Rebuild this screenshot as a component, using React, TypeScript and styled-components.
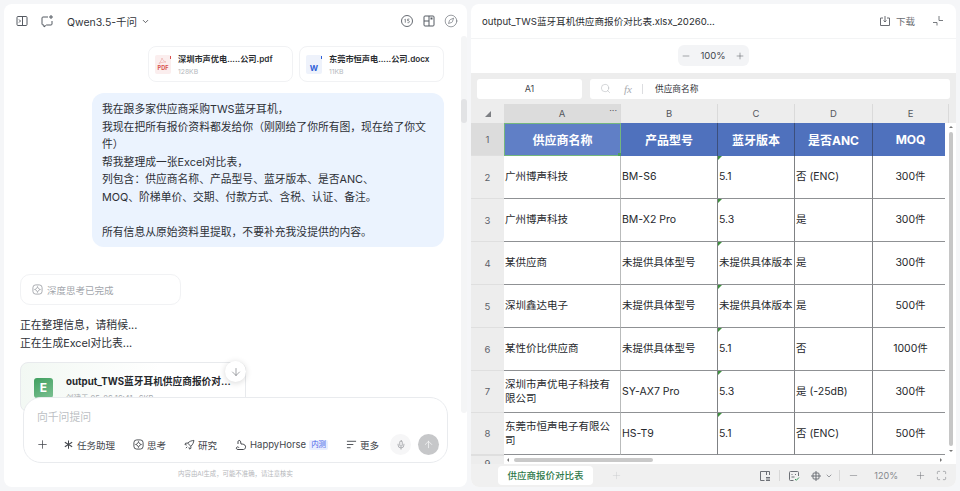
import React from 'react'
import styled, { createGlobalStyle } from 'styled-components'
import {
  ArrowDown, ArrowUp, ChevronDown, Compass, Maximize, Mic, Minus, Plus, Search,
} from 'lucide-react'

const FONT = `Inter, "Noto Sans CJK SC", sans-serif`

const GlobalStyle = createGlobalStyle`
  html, body { margin: 0; padding: 0; height: 100%; background: #f5f6f8; }
  body { font-family: ${FONT}; color: #26282c; overflow: hidden; }
  * { box-sizing: border-box; }
`

const Page = styled.div`
  width: 960px;
  height: 491px;
  padding: 4px;
  display: flex;
  gap: 4px;
`

const ChatPanel = styled.section`
  position: relative;
  width: 463px;
  height: 483px;
  background: #fff;
  border-radius: 8px;
  overflow: hidden;
  flex: none;
`

const ChatHeader = styled.header`
  height: 34px;
  padding: 0 9px 0 11px;
  display: flex;
  align-items: center;
  color: #555a62;
`

const IconBtn = styled.span<{ $gap?: number }>`
  display: inline-flex;
  width: 14px;
  height: 14px;
  margin-right: ${p => p.$gap ?? 0}px;
  flex: none;
`

const ModelName = styled.div`
  display: flex;
  align-items: center;
  gap: 4px;
  font-size: 10.5px;
  color: #33363b;
  flex: 1;
`

const Thread = styled.div`
  padding: 8px 19px 0 16px;
  height: 100%;
  overflow: hidden;
`

const Attachments = styled.div`
  display: flex;
  justify-content: flex-end;
  gap: 6px;
  padding-right: 4px;
`

const FileChip = styled.div`
  width: 145px;
  height: 36px;
  border: 1px solid #f1f2f4;
  border-radius: 8px;
  display: flex;
  align-items: center;
  gap: 7px;
  padding-left: 6px;
`

const FileBadge = styled.div<{ $word?: boolean }>`
  position: relative;
  width: 16px;
  height: 19px;
  background: ${p => (p.$word ? '#eef2fb' : '#fbeeee')};
  border-radius: 2px;
  color: ${p => (p.$word ? '#2f5fd8' : '#d8504d')};
  font-weight: 700;
  font-size: ${p => (p.$word ? 8 : 5.5)}px;
  display: flex;
  align-items: flex-end;
  justify-content: center;
  line-height: 11px;
  flex: none;
  &::after {
    content: '';
    position: absolute;
    right: 0;
    top: 1px;
    width: 1px;
    height: 3px;
    background: ${p => (p.$word ? '#2f5fd8' : '#d8504d')};
  }
`

const SwirlSvg = styled.svg`
  position: absolute;
  top: 2px;
  left: 3px;
`

const FileInfo = styled.div`
  display: flex;
  flex-direction: column;
  gap: 2px;
`

const FileName = styled.div`
  font-size: 8.2px;
  font-weight: 600;
  line-height: 12px;
  color: #2b2d31;
  white-space: nowrap;
`

const FileSize = styled.div`
  font-size: 6.8px;
  line-height: 9px;
  color: #b4b7bc;
`

const UserBubble = styled.div`
  margin: 11px 4px 0 72px;
  width: 352px;
  height: 154px;
  padding: 8px 10px;
  background: #ebf3fe;
  border-radius: 12px;
  font-size: 10.8px;
  line-height: 17.5px;
  color: #2d3036;
`

const ThinkingChip = styled.div`
  margin: 27px 0 0 0;
  width: 161px;
  height: 31px;
  border: 1px solid #f1f2f4;
  border-radius: 10px;
  display: flex;
  align-items: center;
  gap: 4px;
  padding-left: 11px;
  color: #a2a5ab;
  font-size: 9.5px;
`

const AnswerText = styled.div`
  margin: 12px 0 0 0;
  font-size: 10.8px;
  line-height: 17.5px;
  color: #2d3036;
`

const ExcelCard = styled.div`
  margin: 10px 0 0 0;
  width: 226px;
  height: 50px;
  border: 1px solid #e8eaed;
  border-radius: 8px;
  display: flex;
  gap: 13px;
  padding: 15px 0 0 13px;
  background: linear-gradient(100deg, #f2f8f3, #fff 60%);
`

const ExcelIcon = styled.div`
  width: 19px;
  height: 20px;
  border-radius: 3px;
  background: linear-gradient(150deg, #3f9f5f, #7cc092);
  color: #fff;
  font-weight: 700;
  font-size: 12px;
  line-height: 20px;
  text-align: center;
  flex: none;
`

const ExcelTitle = styled.div`
  font-size: 9.7px;
  font-weight: 700;
  line-height: 14px;
  margin-top: -3px;
  white-space: nowrap;
`

const ExcelMeta = styled.div`
  font-size: 7.5px;
  line-height: 10px;
  color: #a6a9ae;
  margin-top: 5px;
`

const ScrollDown = styled.div`
  position: absolute;
  left: 221px;
  top: 357px;
  width: 21px;
  height: 21px;
  border-radius: 50%;
  background: #fff;
  box-shadow: 0 1px 6px rgba(0, 0, 0, 0.16);
  color: #666a70;
  display: flex;
  align-items: center;
  justify-content: center;
`

const ThreadScroll = styled.div`
  position: absolute;
  right: 0;
  top: 32px;
  width: 6px;
  height: 377px;
  border-radius: 3px;
  background: #f4f5f6;
  &::after {
    content: '';
    display: block;
    margin-top: 63px;
    height: 24px;
    border-radius: 3px;
    background: #e2e3e5;
  }
`

const Composer = styled.div`
  position: absolute;
  left: 19px;
  top: 393px;
  width: 425px;
  height: 66px;
  background: #fff;
  border: 1px solid #e9ebee;
  border-radius: 18px;
  padding: 11px 8px 0 12px;
`

const Placeholder = styled.div`
  padding-left: 1px;
  font-size: 10.8px;
  line-height: 18px;
  color: #bcbfc4;
`

const ToolRow = styled.div`
  display: flex;
  align-items: center;
  margin-top: 7px;
  font-size: 9.5px;
  color: #43464c;
`

const Tool = styled.div<{ $w: number }>`
  display: flex;
  align-items: center;
  gap: 3px;
  width: ${p => p.$w}px;
  flex: none;
  white-space: nowrap;
`

const BetaTag = styled.span`
  background: #e9eeff;
  color: #4a63e8;
  font-size: 7.5px;
  line-height: 10px;
  padding: 0 2px;
  border-radius: 2px;
`

const RoundBtn = styled.div<{ $solid?: boolean }>`
  width: 21px;
  height: 21px;
  border-radius: 50%;
  margin-left: 7px;
  background: ${p => (p.$solid ? '#c6c7c9' : '#f6f6f7')};
  color: ${p => (p.$solid ? '#fff' : '#6a6d73')};
  display: flex;
  align-items: center;
  justify-content: center;
  flex: none;
`

const Disclaimer = styled.div`
  position: absolute;
  left: 0;
  right: 0;
  top: 465px;
  text-align: center;
  font-size: 6.4px;
  line-height: 10px;
  color: #b5b7bb;
`

const SheetPanel = styled.section`
  width: 485px;
  height: 483px;
  background: #fff;
  border-radius: 8px;
  overflow: hidden;
  display: flex;
  flex-direction: column;
  flex: none;
`

const SheetHeader = styled.header`
  height: 35px;
  flex: none;
  display: flex;
  align-items: center;
  padding: 0 12px 0 11px;
  border-bottom: 1px solid #f3f4f5;
  color: #6a6d73;
`

const SheetTitle = styled.div`
  flex: 1;
  font-size: 9.6px;
  color: #2b2d31;
  white-space: nowrap;
`

const HeaderAction = styled.div`
  display: flex;
  align-items: center;
  gap: 5px;
  font-size: 9.5px;
  color: #6a6d73;
  margin-right: 17px;
`

const ZoomBar = styled.div`
  height: 34px;
  flex: none;
  display: flex;
  align-items: center;
  justify-content: center;
  padding-bottom: 1px;
`

const ZoomPill = styled.div`
  width: 71px;
  height: 21px;
  border-radius: 6px;
  background: #f3f4f6;
  display: flex;
  align-items: center;
  justify-content: space-between;
  padding: 0 4px 0 3px;
  font-size: 9.5px;
  color: #44474d;
`

const FormulaBar = styled.div`
  height: 31px;
  flex: none;
  background: #ededed;
  display: flex;
  align-items: center;
  gap: 8px;
  padding: 0 6px;
`

const CellName = styled.div`
  width: 105px;
  height: 20px;
  background: #fff;
  border-radius: 3px;
  text-align: center;
  font-size: 9px;
  line-height: 20px;
  color: #44474d;
`

const FormulaInput = styled.div`
  flex: 1;
  height: 20px;
  background: #fff;
  border-radius: 3px;
  display: flex;
  align-items: center;
  font-size: 8.7px;
  color: #33363b;
  padding-left: 10px;
`

const Fx = styled.span`
  font-family: "Liberation Serif", serif;
  font-style: italic;
  font-size: 11px;
  color: #a8abb0;
  margin: 0 5px 0 13px;
`

const FormulaSep = styled.span`
  width: 1px;
  height: 10px;
  background: #dcdde0;
  margin: 0 12px 0 5px;
`

const GridArea = styled.div`
  position: relative;
  flex: 1;
  min-height: 0;
  display: flex;
  background: #ededed;
  overflow: hidden;
`

const Table = styled.div`
  display: grid;
  grid-template-columns: 33px 117px 97px 77px 78px 76px;
  grid-template-rows: 19px 33px 43px 43px 43px 43px 43px 42px 42px;
  width: 478px;
  flex: none;
  overflow: hidden;
`

const Corner = styled.div`
  background: #ededed;
  display: flex;
  align-items: center;
  justify-content: center;
  &::after {
    content: '';
    width: 0;
    height: 0;
    border-left: 6px solid transparent;
    border-bottom: 6px solid #7d7f83;
  }
`

const ColHead = styled.div<{ $active?: boolean }>`
  position: relative;
  background: ${p => (p.$active ? '#dcdcdc' : '#ededed')};
  border-right: 1px solid #dadada;
  text-align: center;
  font-size: 9.5px;
  line-height: 20px;
  color: #55585e;
`

const ColMenu = styled.span`
  position: absolute;
  right: 3px;
  top: -3px;
  font-size: 9px;
  color: #55585e;
`

const RowHead = styled.div<{ $active?: boolean }>`
  background: ${p => (p.$active ? '#dcdcdc' : '#ededed')};
  border-bottom: 1px solid #dfdfdf;
  display: flex;
  align-items: center;
  justify-content: center;
  font-size: 9.5px;
  color: #5c6068;
`

const HeadCell = styled.div<{ $selected?: boolean }>`
  position: relative;
  background: ${p => (p.$selected ? '#607fc6' : '#4f71bd')};
  color: #fff;
  font-size: 12px;
  font-weight: 700;
  display: flex;
  align-items: center;
  justify-content: center;
  border-right: 1px solid #3c4f7c;
  ${p => p.$selected && `
    border: 1px solid #74b77e;
    &::after {
      content: '';
      position: absolute;
      right: -1px;
      bottom: -1px;
      width: 3px;
      height: 3px;
      background: #4f9f5c;
    }
  `}
`

const Cell = styled.div<{ $center?: boolean; $mark?: boolean; $first?: boolean }>`
  position: relative;
  background: #fff;
  border-right: 1px solid ${p => (p.$first ? '#b9bbbb' : '#7f8184')};
  border-bottom: 1px solid #8f9194;
  font-size: 10.5px;
  line-height: 13.5px;
  color: #26282c;
  display: flex;
  align-items: center;
  padding: 0 1px;
  justify-content: ${p => (p.$center ? 'center' : 'flex-start')};
  ${p => p.$mark && `
    &::before {
      content: '';
      position: absolute;
      left: 0;
      top: 0;
      border-top: 4px solid #3f8f3f;
      border-right: 4px solid transparent;
    }
  `}
`

const VScroll = styled.div`
  position: absolute;
  right: 0;
  top: 19px;
  bottom: 0;
  width: 11px;
  background: #fff;
  display: flex;
  flex-direction: column;
  align-items: center;
  padding: 3px 0;
`

const VThumb = styled.div`
  flex: 1;
  width: 4px;
  margin: 4px 0;
  background: #c6c6c6;
  border-radius: 2px;
`

const Arrow = styled.span<{ $dir: 'up' | 'down' | 'left' | 'right' }>`
  display: block;
  width: 0;
  height: 0;
  flex: none;
  border: 2.5px solid transparent;
  ${p => (p.$dir === 'up' && 'border-bottom-color: #777; border-top-width: 0;')
    || (p.$dir === 'down' && 'border-top-color: #777; border-bottom-width: 0;')
    || (p.$dir === 'left' && 'border-right-color: #777; border-left-width: 0;')
    || 'border-left-color: #777; border-right-width: 0;'}
`

const HScrollRow = styled.div`
  height: 9px;
  flex: none;
  display: flex;
  align-items: center;
  background: #fff;
  padding-right: 14px;
`

const HScrollGutter = styled.div`
  width: 33px;
  height: 9px;
  background: #ededed;
  border-top: 1px solid #dfdfdf;
  font-size: 9.5px;
  line-height: 16px;
  text-align: center;
  color: #5c6068;
  overflow: hidden;
  margin-right: 3px;
`

const HScrollThumb = styled.div`
  width: 139px;
  height: 4px;
  margin-left: 5px;
  margin-right: auto;
  border-radius: 2px;
  background: #c9c9c9;
`

const SheetTabs = styled.div`
  height: 23px;
  flex: none;
  background: #f0f0f0;
  display: flex;
  align-items: center;
  padding: 0 9px 0 27px;
  color: #6a6d73;
`

const ActiveTab = styled.div`
  width: 95px;
  height: 19px;
  background: #fff;
  border-radius: 4px;
  font-size: 9.5px;
  font-weight: 500;
  line-height: 19px;
  text-align: center;
  color: #2f7a4b;
  margin-right: 18px;
`

const TabSpacer = styled.div`
  flex: 1;
`

const StatusIcon = styled.span<{ $gap?: number; $lead?: number }>`
  display: inline-flex;
  margin-left: ${p => p.$lead ?? 0}px;
  margin-right: ${p => p.$gap ?? 10}px;
  color: #6d7076;
`

const ZoomText = styled.span`
  font-size: 9px;
  color: #85888d;
  margin: 0 17px 0 15px;
`

const StatusSep = styled.span`
  width: 1px;
  height: 11px;
  background: #d8d8d8;
  margin-right: 8px;
`

const SidebarIcon = () => (
  <svg width="14" height="14" viewBox="0 0 14 14" fill="none" stroke="currentColor" strokeWidth="1">
    <rect x="2" y="2.5" width="10" height="9" rx="1" />
    <path d="M7.5 2.5v9M4 5.5L5.5 7 4 8.5" />
  </svg>
)

const NewChatIcon = () => (
  <svg width="14" height="14" viewBox="0 0 14 14" fill="none" stroke="currentColor" strokeWidth="1">
    <path d="M8 3H3a1 1 0 0 0-1 1v6a1 1 0 0 0 1 1h1v2l2.500-2H11a1 1 0 0 0 1-1V7" />
    <path d="M11 1v4M9 3h4" />
  </svg>
)

const ClockBadgeIcon = () => (
  <svg width="14" height="14" viewBox="0 0 14 14" fill="none" stroke="currentColor" strokeWidth="0.9">
    <circle cx="7" cy="7" r="5.5" />
    <path d="M4.6 5.5l.7-.4v3.6M7.5 8.7h1c1.3 0 1.3-2-.1-2H7.6l.1-1.600h1.700" strokeWidth="0.7" />
  </svg>
)

const LayoutIcon = () => (
  <svg width="14" height="14" viewBox="0 0 14 14" fill="none" stroke="currentColor" strokeWidth="1">
    <rect x="2" y="2" width="10" height="10" rx="1" />
    <path d="M2 7h5V2M7 7v5" />
    <rect x="8.5" y="3.5" width="2" height="2" fill="currentColor" stroke="none" />
  </svg>
)

const PdfSwirl = () => (
  <SwirlSvg width="9" height="8" viewBox="0 0 9 8" fill="none" stroke="#eda6a4" strokeWidth="0.6">
    <path d="M4 1c-.5 2-1.500 4-3 5.500 2-1 4-1.500 7-1.500C6 4.500 4.500 3 4 1z" />
  </SwirlSvg>
)

const ThinkIcon = ({ size = 11 }: { size?: number }) => (
  <svg width={size} height={size} viewBox="0 0 12 12" fill="none" stroke="currentColor" strokeWidth="1">
    <rect x="1" y="1" width="10" height="10" rx="3" />
    <path d="M6 2.800c.6 2 1.200 2.600 3.200 3.200-2 .6-2.600 1.200-3.200 3.200C5.400 7.200 4.800 6.600 2.800 6c2-.6 2.600-1.200 3.200-3.200z" />
  </svg>
)

const AsteriskIcon = () => (
  <svg width="11" height="11" viewBox="0 0 12 12" fill="none" stroke="currentColor" strokeWidth="1.1">
    <path d="M6 1.500v9M2 3.500l8 5M10 3.500l-8 5" />
  </svg>
)

const RocketIcon = () => (
  <svg width="11" height="11" viewBox="0 0 12 12" fill="none" stroke="currentColor" strokeWidth="1">
    <path d="M4 4.500C6 2.500 8.500 1.800 10.800 1.500 10.500 4 9.500 6 7.500 8L4 4.500z" />
    <path d="M4 4.500H1.800L1 6l2 .6M7.500 8v2.200L6 11l-.6-2M3.500 8.500L2 10" />
  </svg>
)

const HorseIcon = () => (
  <svg width="12" height="12" viewBox="0 0 12 12" fill="none" stroke="currentColor" strokeWidth="1">
    <path d="M3 5V2.500C3 1.500 5 1 5.500 2.200L6 5c2 0 4 .4 4.500 2.200.3 1.300-.5 3.300-2 3.300H3C1.600 10.500 1 9.500 1.500 8.500 2 7.500 3.500 7.800 4 8.800" />
  </svg>
)

const MoreIcon = () => (
  <svg width="11" height="11" viewBox="0 0 12 12" fill="none" stroke="currentColor" strokeWidth="1">
    <path d="M1 2.500h10M1 6h7M1 9.500h4" />
  </svg>
)

const DownloadIcon = () => (
  <svg width="12" height="12" viewBox="0 0 12 12" fill="none" stroke="currentColor" strokeWidth="1">
    <path d="M4 3H1.500v7.500h9V3H8M6 1v6M4.500 5.500L6 7l1.500-1.500" />
  </svg>
)

const CollapseIcon = () => (
  <svg width="12" height="12" viewBox="0 0 12 12" fill="none" stroke="currentColor" strokeWidth="0.9">
    <path d="M1 7.500h4v3M7 1v4.500h4" />
  </svg>
)

const SheetViewIcon = () => (
  <svg width="12" height="12" viewBox="0 0 12 12" fill="none" stroke="currentColor" strokeWidth="1">
    <path d="M10.500 5V1.500h-9v9h4M7.500 1.500V5M7 7.500h4M7 9h4M7 10.500h4" />
  </svg>
)

const CheckBoxIcon = () => (
  <svg width="12" height="12" viewBox="0 0 12 12" fill="none" stroke="currentColor" strokeWidth="1">
    <path d="M5.500 10.500H2.500a1 1 0 0 1-1-1v-7a1 1 0 0 1 1-1h7a1 1 0 0 1 1 1V6" />
    <path d="M3.500 4.500h1M7 4.500h1M3.500 7h3" />
    <path d="M7 9l1.300 1.300L11 7.500" stroke="#3f9a5c" />
  </svg>
)

const CenterIcon = () => (
  <svg width="12" height="12" viewBox="0 0 12 12" fill="none" stroke="currentColor" strokeWidth="1">
    <rect x="3" y="3" width="6" height="6" rx="1" />
    <path d="M6 1v10M1 6h10" />
  </svg>
)

const COLUMNS = ['A', 'B', 'C', 'D', 'E']
const HEADINGS = ['供应商名称', '产品型号', '蓝牙版本', '是否ANC', 'MOQ']

const ROWS: string[][] = [
  ['广州博声科技', 'BM-S6', '5.1', '否 (ENC)', '300件'],
  ['广州博声科技', 'BM-X2 Pro', '5.3', '是', '300件'],
  ['某供应商', '未提供具体型号', '未提供具体版本', '是', '300件'],
  ['深圳鑫达电子', '未提供具体型号', '未提供具体版本', '是', '500件'],
  ['某性价比供应商', '未提供具体型号', '5.1', '否', '1000件'],
  ['深圳市声优电子科技有限公司', 'SY-AX7 Pro', '5.3', '是 (-25dB)', '300件'],
  ['东莞市恒声电子有限公司', 'HS-T9', '5.1', '否 (ENC)', '500件'],
]

const MESSAGE = [
  '我在跟多家供应商采购TWS蓝牙耳机，',
  '我现在把所有报价资料都发给你（刚刚给了你所有图，现在给了你文件）',
  '帮我整理成一张Excel对比表，',
  '列包含：供应商名称、产品型号、蓝牙版本、是否ANC、',
  'MOQ、阶梯单价、交期、付款方式、含税、认证、备注。',
]

export default function App() {
  return (
    <Page>
      <GlobalStyle />
      <ChatPanel>
        <ChatHeader>
          <IconBtn $gap={11}><SidebarIcon /></IconBtn>
          <IconBtn $gap={13}><NewChatIcon /></IconBtn>
          <ModelName>
            Qwen3.5-千问
            <ChevronDown size={9} />
          </ModelName>
          <IconBtn $gap={8}><ClockBadgeIcon /></IconBtn>
          <IconBtn $gap={8}><LayoutIcon /></IconBtn>
          <IconBtn><Compass size={14} strokeWidth={1} /></IconBtn>
        </ChatHeader>
        <Thread>
          <Attachments>
            <FileChip>
              <FileBadge><PdfSwirl />PDF</FileBadge>
              <FileInfo>
                <FileName>深圳市声优电.....公司.pdf</FileName>
                <FileSize>128KB</FileSize>
              </FileInfo>
            </FileChip>
            <FileChip>
              <FileBadge $word>W</FileBadge>
              <FileInfo>
                <FileName>东莞市恒声电.....公司.docx</FileName>
                <FileSize>11KB</FileSize>
              </FileInfo>
            </FileChip>
          </Attachments>
          <UserBubble>
            {MESSAGE.map(line => <div key={line}>{line}</div>)}
            <br />
            <div>所有信息从原始资料里提取，不要补充我没提供的内容。</div>
          </UserBubble>
          <ThinkingChip>
            <ThinkIcon />
            深度思考已完成
          </ThinkingChip>
          <AnswerText>
            <div>正在整理信息，请稍候...</div>
            <div>正在生成Excel对比表...</div>
          </AnswerText>
          <ExcelCard>
            <ExcelIcon>E</ExcelIcon>
            <div>
              <ExcelTitle>output_TWS蓝牙耳机供应商报价对...</ExcelTitle>
              <ExcelMeta>创建于 05-06 16:41 · 6KB</ExcelMeta>
            </div>
          </ExcelCard>
        </Thread>
        <ThreadScroll />
        <ScrollDown><ArrowDown size={12} strokeWidth={1.2} /></ScrollDown>
        <Composer>
          <Placeholder>向千问提问</Placeholder>
          <ToolRow>
            <Tool $w={27}><Plus size={13} strokeWidth={1.4} /></Tool>
            <Tool $w={70}><AsteriskIcon />任务助理</Tool>
            <Tool $w={51}><ThinkIcon />思考</Tool>
            <Tool $w={51}><RocketIcon />研究</Tool>
            <Tool $w={111}><HorseIcon />HappyHorse <BetaTag>内测</BetaTag></Tool>
            <Tool $w={37}><MoreIcon />更多</Tool>
            <RoundBtn><Mic size={10} strokeWidth={1.2} /></RoundBtn>
            <RoundBtn $solid><ArrowUp size={11} strokeWidth={1.4} /></RoundBtn>
          </ToolRow>
        </Composer>
        <Disclaimer>内容由AI生成，可能不准确，请注意核实</Disclaimer>
      </ChatPanel>

      <SheetPanel>
        <SheetHeader>
          <SheetTitle>output_TWS蓝牙耳机供应商报价对比表.xlsx_20260...</SheetTitle>
          <HeaderAction><DownloadIcon />下载</HeaderAction>
          <CollapseIcon />
        </SheetHeader>
        <ZoomBar>
          <ZoomPill>
            <Minus size={10} strokeWidth={1.1} />
            100%
            <Plus size={10} strokeWidth={1.1} />
          </ZoomPill>
        </ZoomBar>
        <FormulaBar>
          <CellName>A1</CellName>
          <FormulaInput>
            <Search size={11} strokeWidth={1} color="#a8abb0" />
            <Fx>fx</Fx>
            <FormulaSep />
            供应商名称
          </FormulaInput>
        </FormulaBar>
        <GridArea>
          <Table>
            <Corner />
            {COLUMNS.map((c, i) => (
              <ColHead key={c} $active={i === 0}>
                {c}
                {i === 0 && <ColMenu>···</ColMenu>}
              </ColHead>
            ))}
            <RowHead $active>1</RowHead>
            {HEADINGS.map((h, i) => <HeadCell key={h} $selected={i === 0}>{h}</HeadCell>)}
            {ROWS.map((row, r) => (
              <React.Fragment key={r}>
                <RowHead>{r + 2}</RowHead>
                {row.map((v, c) => (
                  <Cell key={c} $first={c === 0} $center={c === 4} $mark={c === 2}>{v}</Cell>
                ))}
              </React.Fragment>
            ))}
          </Table>
          <VScroll>
            <Arrow $dir="up" />
            <VThumb />
            <Arrow $dir="down" />
          </VScroll>
        </GridArea>
        <HScrollRow>
          <HScrollGutter>9</HScrollGutter>
          <Arrow $dir="left" />
          <HScrollThumb />
          <Arrow $dir="right" />
        </HScrollRow>
        <SheetTabs>
          <ActiveTab>供应商报价对比表</ActiveTab>
          <Plus size={11} strokeWidth={1} color="#c8cacd" />
          <TabSpacer />
          <StatusIcon $gap={8}><SheetViewIcon /></StatusIcon>
          <StatusSep />
          <StatusIcon><CheckBoxIcon /></StatusIcon>
          <StatusIcon $gap={3}><CenterIcon /></StatusIcon>
          <StatusIcon $gap={6}><ChevronDown size={8} /></StatusIcon>
          <StatusSep />
          <Minus size={11} strokeWidth={1.1} color="#6d7076" />
          <ZoomText>120%</ZoomText>
          <Plus size={11} strokeWidth={1.1} color="#6d7076" />
          <StatusIcon $gap={0} $lead={10}><Maximize size={11} strokeWidth={1.1} /></StatusIcon>
        </SheetTabs>
      </SheetPanel>
    </Page>
  )
}
